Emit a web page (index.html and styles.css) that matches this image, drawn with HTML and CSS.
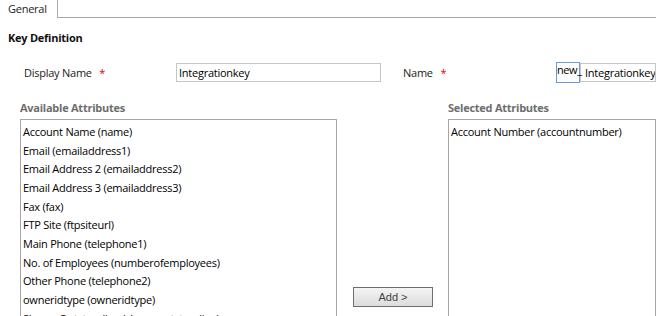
FILE: index.html
```html
<!DOCTYPE html>
<html>
<head>
<meta charset="utf-8">
<link rel="stylesheet" href="styles.css">
</head>
<body>
<div class="tabs">
  <div class="tab">General</div>
  <div class="tab-rest"></div>
</div>
<div class="section-title">Key Definition</div>
<div class="form-row">
  <div class="label first-label">Display Name <span class="req">*</span></div>
  <div class="input display-input">Integrationkey</div>
  <div class="label name-label">Name <span class="req">*</span></div>
  <div class="prefix">new_</div>
  <div class="input name-input">Integrationkey</div>
</div>
<div class="lists">
  <div class="col-left">
    <div class="list-title">Available Attributes</div>
    <div class="listbox left-box">
      <div class="item">Account Name (name)</div>
      <div class="item">Email (emailaddress1)</div>
      <div class="item">Email Address 2 (emailaddress2)</div>
      <div class="item">Email Address 3 (emailaddress3)</div>
      <div class="item">Fax (fax)</div>
      <div class="item">FTP Site (ftpsiteurl)</div>
      <div class="item">Main Phone (telephone1)</div>
      <div class="item">No. of Employees (numberofemployees)</div>
      <div class="item">Other Phone (telephone2)</div>
      <div class="item">owneridtype (owneridtype)</div>
      <div class="item">Shares Outstanding (sharesoutstanding)</div>
    </div>
  </div>
  <div class="col-mid">
    <button class="btn">Add &gt;</button>
  </div>
  <div class="col-right">
    <div class="list-title">Selected Attributes</div>
    <div class="listbox right-box">
      <div class="item">Account Number (accountnumber)</div>
    </div>
  </div>
</div>
</body>
</html>
```
FILE: styles.css
```css
html, body {
  margin: 0;
  padding: 0;
  background: #fff;
  overflow: hidden;
  width: 656px;
  height: 316px;
}
body {
  font-family: "Open Sans", "Noto Sans", sans-serif;
  font-size: 11px;
  letter-spacing: -0.25px;
  color: #000;
}
.tabs {
  display: flex;
  height: 18px;
}
.tab {
  width: 49px;
  padding-left: 8px;
  border-right: 1px solid #a8a8a8;
  line-height: 18px;
  color: #222;
}
.tab-rest {
  flex: 1;
  border-bottom: 1px solid #a8a8a8;
}
.section-title {
  font-weight: bold;
  padding-left: 8px;
  margin-top: 11px;
  line-height: 18px;
  color: #111;
}
.form-row {
  display: flex;
  align-items: flex-start;
  margin-top: 16px;
  height: 20px;
}
.form-row > * {
  flex-shrink: 0;
}
.label {
  color: #222;
  line-height: 19px;
}
.first-label {
  margin-left: 24px;
  width: 152px;
}
.req {
  color: #e00000;
  margin-left: 5px;
}
.input {
  box-sizing: border-box;
  height: 19px;
  border: 1px solid #c6c6c6;
  line-height: 17px;
  padding-left: 2px;
  color: #000;
  white-space: nowrap;
  overflow: hidden;
}
.display-input {
  width: 205px;
}
.name-label {
  margin-left: 22px;
  width: 153px;
}
.prefix {
  box-sizing: border-box;
  width: 24px;
  height: 21px;
  margin-top: -1px;
  border: 1px solid #6b9bd2;
  line-height: 13px;
  overflow: visible;
  white-space: nowrap;
  letter-spacing: -0.4px;
  position: relative;
  z-index: 1;
}
.form-row > .name-input {
  flex: 1 1 auto;
  min-width: 0;
  padding-left: 4px;
}
.lists {
  display: flex;
  margin-top: 21px;
  padding-left: 20px;
}
.list-title {
  font-weight: bold;
  color: #6e6e6e;
  line-height: 17px;
  margin-top: -5px;
  margin-bottom: 3px;
}
.col-left {
  width: 317px;
  flex-shrink: 0;
}
.listbox {
  box-sizing: border-box;
  border: 1px solid #a6a6a6;
  border-bottom: none;
  height: 200px;
  padding-top: 3px;
  overflow: hidden;
}
.left-box {
  width: 317px;
}
.item {
  line-height: 18.67px;
  padding-left: 2px;
  white-space: nowrap;
}
.col-mid {
  width: 111px;
  flex-shrink: 0;
  display: flex;
  justify-content: center;
  align-items: flex-start;
  padding-top: 183px;
}
.btn {
  width: 80px;
  height: 20px;
  border: 1px solid #6d6d6d;
  background: linear-gradient(#f4f4f4, #dcdcdc);
  font-family: "Liberation Sans", Arial, sans-serif;
  font-size: 11px;
  letter-spacing: 0;
  color: #444;
  padding: 0;
  margin-left: 1px;
}
.col-right {
  flex: 1;
}
.right-box {
  width: 100%;
}
```
